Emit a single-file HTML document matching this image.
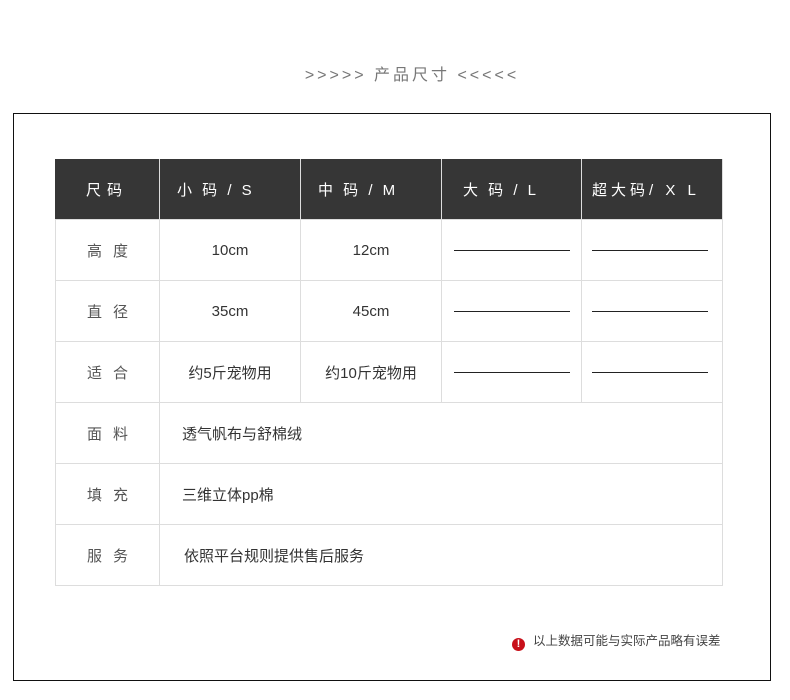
<!DOCTYPE html>
<html><head><meta charset="utf-8"><style>
body{margin:0;width:790px;height:700px;background:#fff;position:relative;overflow:hidden;font-family:"Liberation Sans","Noto Sans CJK SC",sans-serif;}
.t{position:absolute;top:61px;left:0;width:824px;text-align:center;font-size:16px;color:#777;letter-spacing:3px;}
.box{position:absolute;left:13px;top:113px;width:758px;height:568px;border:1.5px solid #111;box-sizing:border-box;}
table{position:absolute;left:55px;top:159px;border-collapse:collapse;}
td{border:1px solid #ddd;height:60px;padding:0;font-size:15px;color:#333;text-align:center;}
tr.h td{height:59px;background:#363636;color:#fff;border-color:#ddd;border-top-color:#363636;border-left-color:#363636;text-align:left;padding-left:17px;letter-spacing:3px;}
tr.h td:first-child{padding-left:30px;letter-spacing:6px;}
td.l{color:#555;letter-spacing:11px;font-size:15px;text-align:left;padding-left:31px;}
td.x{text-align:left;padding-left:22px;}
.d{display:block;margin:0 auto 0 12px;width:116px;border-top:1px solid #222;}
td:last-child .d{margin-left:10px;}
.n{position:absolute;left:512px;top:630px;font-size:12.5px;color:#444;}
.n i{display:inline-block;width:13px;height:13px;border-radius:50%;background:#c8101a;color:#fff;font-style:normal;font-weight:bold;font-size:11px;line-height:13px;text-align:center;vertical-align:-2px;margin-right:8px;}
</style></head><body>
<div class="t">&gt;&gt;&gt;&gt;&gt; 产品尺寸 &lt;&lt;&lt;&lt;&lt;</div>
<div class="box"></div>
<table>
<colgroup><col style="width:104px"><col style="width:141px"><col style="width:141px"><col style="width:140px"><col style="width:141px"></colgroup>
<tr class="h"><td>尺码</td><td>小 码 / S</td><td>中 码 / M</td><td style="padding-left:21px">大 码 / L</td><td style="padding-left:10px;letter-spacing:4px">超大码/ X L</td></tr>
<tr><td class="l">高度</td><td>10cm</td><td>12cm</td><td><span class="d"></span></td><td><span class="d"></span></td></tr>
<tr><td class="l">直径</td><td>35cm</td><td>45cm</td><td><span class="d"></span></td><td><span class="d"></span></td></tr>
<tr><td class="l">适合</td><td>约5斤宠物用</td><td>约10斤宠物用</td><td><span class="d"></span></td><td><span class="d"></span></td></tr>
<tr><td class="l">面料</td><td class="x" colspan="4">透气帆布与舒棉绒</td></tr>
<tr><td class="l">填充</td><td class="x" colspan="4">三维立体pp棉</td></tr>
<tr><td class="l">服务</td><td class="x" colspan="4" style="padding-left:24px">依照平台规则提供售后服务</td></tr>
</table>
<div class="n"><i>!</i>以上数据可能与实际产品略有误差</div>
</body></html>
